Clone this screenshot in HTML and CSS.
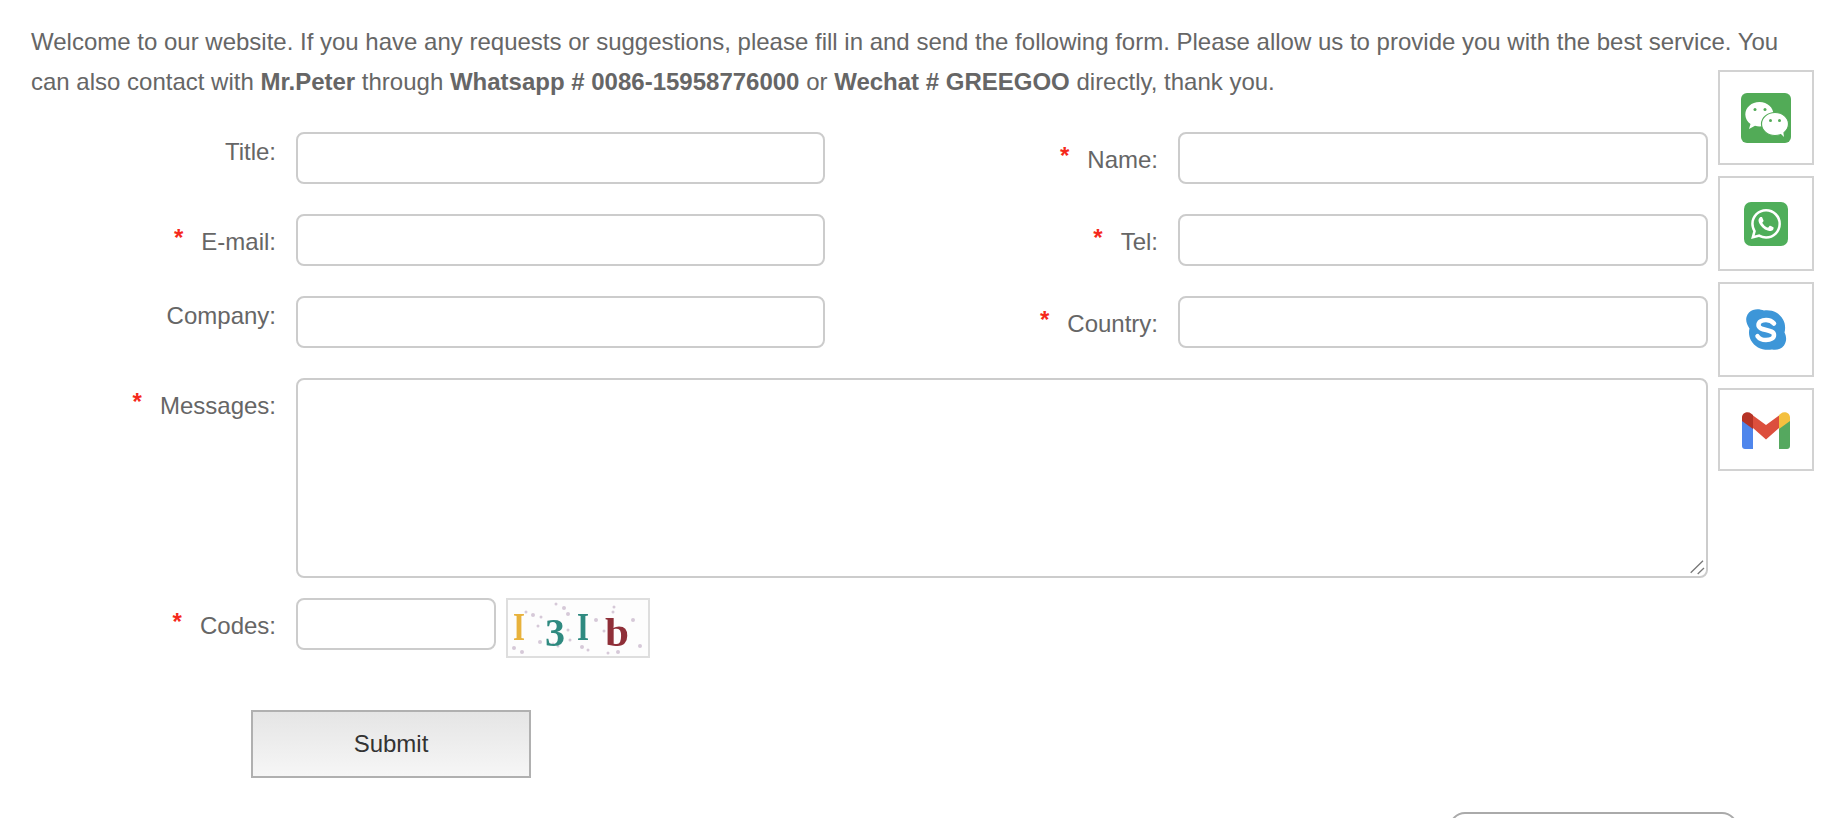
FILE: index.html
```html
<!DOCTYPE html>
<html lang="en">

<head>
    <meta charset="UTF-8">
    <meta name="viewport" content="width=device-width, initial-scale=1.0">
    <title>Contact</title>
    <link rel="stylesheet" href="styles.css">
</head>

<body>

    <div class="container">
        <p class="intro">Welcome to our website. If you have any requests or suggestions, please fill in and send the following form. Please allow us to provide you with the best service. You can also contact with <strong>Mr.Peter</strong> through <strong>Whatsapp # 0086-15958776000</strong> or <strong>Wechat # GREEGOO</strong> directly, thank you.</p>

        <form class="inquiry-form">
            <div class="form-row">
                <label class="field-label" for="title">Title:</label>
                <input class="field-input" type="text" id="title">
                <label class="field-label field-label-wide required" for="name"><span class="star">*</span>Name:</label>
                <input class="field-input" type="text" id="name">
            </div>
            <div class="form-row">
                <label class="field-label required" for="email"><span class="star">*</span>E-mail:</label>
                <input class="field-input" type="text" id="email">
                <label class="field-label field-label-wide required" for="tel"><span class="star">*</span>Tel:</label>
                <input class="field-input" type="text" id="tel">
            </div>
            <div class="form-row">
                <label class="field-label" for="company">Company:</label>
                <input class="field-input" type="text" id="company">
                <label class="field-label field-label-wide required" for="country"><span class="star">*</span>Country:</label>
                <input class="field-input" type="text" id="country">
            </div>
            <div class="form-row form-row-tight">
                <label class="field-label required" for="messages"><span class="star">*</span>Messages:</label>
                <div class="area-wrap">
                    <textarea class="field-area" id="messages"></textarea>
                    <svg class="area-grip" width="16" height="16" viewBox="0 0 16 16">
                        <path d="M.7 12.700L13 .7M7.700 14L14 8" fill="none" stroke="#777" stroke-width="1.300"/>
                    </svg>
                </div>
            </div>
            <div class="form-row form-row-codes">
                <label class="field-label required" for="codes"><span class="star">*</span>Codes:</label>
                <input class="field-input field-input-short" type="text" id="codes">
                <svg class="captcha" width="144" height="60" viewBox="0 0 144 60">
                    <rect x="1" y="1" width="142" height="58" fill="#fdfdfd" stroke="#dedede" stroke-width="2"/>
                    <g fill="#d6c9d8">
                        <circle cx="20" cy="14" r="1.500"/><circle cx="27" cy="17" r="2"/><circle cx="35" cy="19" r="1.500"/>
                        <circle cx="50" cy="6" r="1.500"/><circle cx="47" cy="46" r="1.500"/><circle cx="32" cy="28" r="1.500"/>
                        <circle cx="52" cy="48" r="1.500"/><circle cx="8" cy="50" r="2"/><circle cx="16" cy="54" r="2"/>
                        <circle cx="34" cy="44" r="2"/><circle cx="62" cy="16" r="2"/><circle cx="58" cy="10" r="2"/>
                        <circle cx="62" cy="32" r="1.500"/><circle cx="76" cy="49" r="2"/><circle cx="82" cy="52" r="1.500"/>
                        <circle cx="90" cy="22" r="2"/><circle cx="64" cy="42" r="1.500"/><circle cx="98" cy="33" r="1.500"/>
                        <circle cx="107" cy="14" r="1.500"/><circle cx="102" cy="55" r="1.500"/><circle cx="127" cy="22" r="2"/>
                        <circle cx="134" cy="48" r="2"/><circle cx="108" cy="9" r="1.500"/><circle cx="112" cy="54" r="2"/>
                    </g>
                    <g class="captcha-text" font-size="40" font-weight="bold">
                        <text x="7" y="42" fill="#e8b23c" textLength="12" lengthAdjust="spacingAndGlyphs">I</text>
                        <text x="39" y="48" fill="#2f8a80">3</text>
                        <text x="71" y="42" fill="#2f8a80" textLength="12" lengthAdjust="spacingAndGlyphs">I</text>
                        <text x="99" y="48" fill="#8f2f38" textLength="24" lengthAdjust="spacingAndGlyphs">b</text>
                    </g>
                </svg>
            </div>
            <button class="submit-btn" type="button">Submit</button>
        </form>

        <div class="more-wrap">
            <div class="more-pill"></div>
        </div>
    </div>

    <!-- Contact icons on the right edge -->
    <div class="side-contacts">
        <a class="side-box side-box-tall">
            <svg class="side-icon" width="50" height="50" viewBox="0 0 50 50">
                <rect width="50" height="50" rx="6" fill="#52ab57"/>
                <path d="M18.500 9C10.500 9 4.300 14.500 4.300 21.500c0 4 2.200 7.300 5.200 9.500L8 36l6-3.300c1.500.4 3 .7 4.500.7 8 0 14-5.500 14-12S26.500 9 18.500 9z" fill="#fff"/>
                <ellipse cx="34" cy="31" rx="13.500" ry="11.500" fill="#fff" stroke="#52ab57" stroke-width="1.200"/>
                <path d="M39 40l4 4-1-7z" fill="#fff"/>
                <circle cx="14" cy="16.500" r="1.500" fill="#52ab57"/><circle cx="24" cy="16.500" r="1.500" fill="#52ab57"/>
                <circle cx="29.500" cy="27.500" r="1.500" fill="#52ab57"/><circle cx="38.500" cy="27.500" r="1.500" fill="#52ab57"/>
            </svg>
        </a>
        <a class="side-box side-box-tall">
            <svg class="side-icon" width="44" height="44" viewBox="0 0 44 44">
                <rect width="44" height="44" rx="7" fill="#4fae5a"/>
                <path transform="translate(7 7) scale(1.250)" fill="#fff" d="M17.472 14.382c-.297-.149-1.758-.867-2.030-.967-.273-.099-.471-.148-.670.150-.197.297-.767.966-.940 1.164-.173.199-.347.223-.644.075-.297-.150-1.255-.463-2.390-1.475-.883-.788-1.480-1.761-1.653-2.059-.173-.297-.018-.458.130-.606.134-.133.298-.347.446-.520.149-.174.198-.298.298-.497.099-.198.050-.371-.025-.520-.075-.149-.669-1.612-.916-2.207-.242-.579-.487-.500-.669-.510-.173-.008-.371-.010-.570-.010-.198 0-.520.074-.792.372-.272.297-1.040 1.016-1.040 2.479 0 1.462 1.065 2.875 1.213 3.074.149.198 2.096 3.200 5.077 4.487.709.306 1.262.489 1.694.625.712.227 1.360.195 1.871.118.571-.085 1.758-.719 2.006-1.413.248-.694.248-1.289.173-1.413-.074-.124-.272-.198-.570-.347m-5.421 7.403h-.004a9.870 9.870 0 01-5.031-1.378l-.361-.214-3.741.982.998-3.648-.235-.374a9.860 9.860 0 01-1.510-5.260c.001-5.450 4.436-9.884 9.888-9.884 2.640 0 5.122 1.030 6.988 2.898a9.825 9.825 0 012.893 6.994c-.003 5.450-4.437 9.884-9.885 9.884m8.413-18.297A11.815 11.815 0 0012.050 0C5.495 0 .160 5.335.157 11.892c0 2.096.547 4.142 1.588 5.945L.057 24l6.305-1.654a11.882 11.882 0 005.683 1.448h.005c6.554 0 11.890-5.335 11.893-11.893a11.821 11.821 0 00-3.480-8.413z"/>
            </svg>
        </a>
        <a class="side-box side-box-tall">
            <svg class="side-icon" width="44" height="42" viewBox="0 0 44 42">
                <path d="M9 1c4-1.500 8-.5 11 .5 8-1 15 2 19 9 2.500 4.500 2.500 9 1.500 13 2 4 2.500 8.500-.5 13-3 4-8 5-12 4-9 1.500-17-2-21-9-2-4-2.500-8-1.500-12C3 15.500 1.500 12 2.500 8 3.500 4.500 6 2 9 1z" fill="#3d96d8"/>
                <path d="M30 14.500C28 12 25.500 11 22 11c-4.500 0-7.500 2-7.500 5 0 6.500 15.500 3.500 15.500 10 0 3-3.200 5-8 5-3.500 0-6.500-1-8.500-3.800" fill="none" stroke="#fff" stroke-width="4.500" stroke-linecap="round"/>
            </svg>
        </a>
        <a class="side-box side-box-short">
            <svg class="side-icon" width="48" height="37" viewBox="0 0 48 37">
                <path d="M0 8v26c0 1.700 1.300 3 3 3h8V16z" fill="#4f86ec"/>
                <path d="M37 16v21h8c1.700 0 3-1.300 3-3V8z" fill="#55a85f"/>
                <path d="M37 3v14l11-8V5.500C48 .800 42 -1 39 1.500z" fill="#f4c03f"/>
                <path d="M11 3.500V16l13 11.500L37 16V3.500L24 13z" fill="#dc4f3d"/>
                <path d="M0 5.500V9l11 8V3L9 1.500C6 -1 0 .800 0 5.500z" fill="#b53326"/>
            </svg>
        </a>
    </div>

</body>

</html>
```

FILE: styles.css
```css
html,
body {
    height: 818px;
    overflow: hidden;
}

body {
    font-family: 'Liberation Sans', Arial, sans-serif;
    font-size: 24px;
    color: #666;
    background: #fff;
    margin: 0;
}

.container {
    padding: 22px 0 0 31px;
}

.intro {
    margin: 0;
    width: 1760px;
    line-height: 40px;
    height: 80px;
}

.inquiry-form {
    margin-top: 30px;
}

.form-row {
    display: flex;
    align-items: flex-start;
    margin-bottom: 30px;
}

.form-row-tight {
    margin-bottom: 20px;
}

.form-row-codes {
    margin-bottom: 52px;
}

.field-label {
    box-sizing: border-box;
    width: 245px;
    margin-right: 20px;
    padding-top: 8px;
    line-height: 24px;
    text-align: right;
}

.field-label-wide {
    width: 333px;
}

.required {
    padding-top: 16px;
}

.star {
    color: #f5291c;
    font-weight: bold;
    margin-right: 18px;
    position: relative;
    top: -4px;
}

.field-input,
.field-area {
    box-sizing: border-box;
    display: block;
    width: 529px;
    height: 52px;
    margin: 0;
    padding: 4px 8px;
    border: 2px solid #ccc;
    border-radius: 8px;
    background: #fff;
}

.field-label-wide + .field-input {
    width: 530px;
}

.field-input-short {
    width: 200px;
}

.area-wrap {
    position: relative;
    width: 1412px;
    height: 200px;
}

.field-area {
    width: 100%;
    height: 100%;
    resize: none;
}

.area-grip {
    position: absolute;
    right: 2px;
    bottom: 2px;
}

.captcha {
    margin-left: 10px;
    filter: blur(0.5px);
}

.captcha-text {
    font-family: 'Liberation Serif', serif;
}

.submit-btn {
    display: block;
    box-sizing: border-box;
    width: 280px;
    height: 68px;
    margin-left: 220px;
    border: 2px solid #b0b0b0;
    background: linear-gradient(#e5e5e5, #f6f6f6);
    color: #333;
    font-family: 'Liberation Sans', Arial, sans-serif;
    font-size: 24px;
}

.more-wrap {
    display: flex;
    justify-content: flex-end;
    height: 6px;
    overflow: hidden;
    padding-right: 92px;
    margin-top: 34px;
}

.more-pill {
    box-sizing: border-box;
    flex: none;
    width: 289px;
    height: 50px;
    border: 2px solid #aaa;
    border-radius: 16px;
}

/* sits over the page at the right edge */
.side-contacts {
    position: fixed;
    top: 70px;
    left: 1718px;
    width: 96px;
    display: flex;
    flex-direction: column;
    gap: 11.6px;
}

.side-box {
    box-sizing: border-box;
    display: flex;
    align-items: center;
    justify-content: center;
    border: 2px solid #d2d2d2;
    background: #fff;
}

.side-box-tall {
    height: 94.5px;
}

.side-box-short {
    height: 83px;
}

.side-icon {
    margin-top: 2px;
    filter: blur(0.5px);
}
```
